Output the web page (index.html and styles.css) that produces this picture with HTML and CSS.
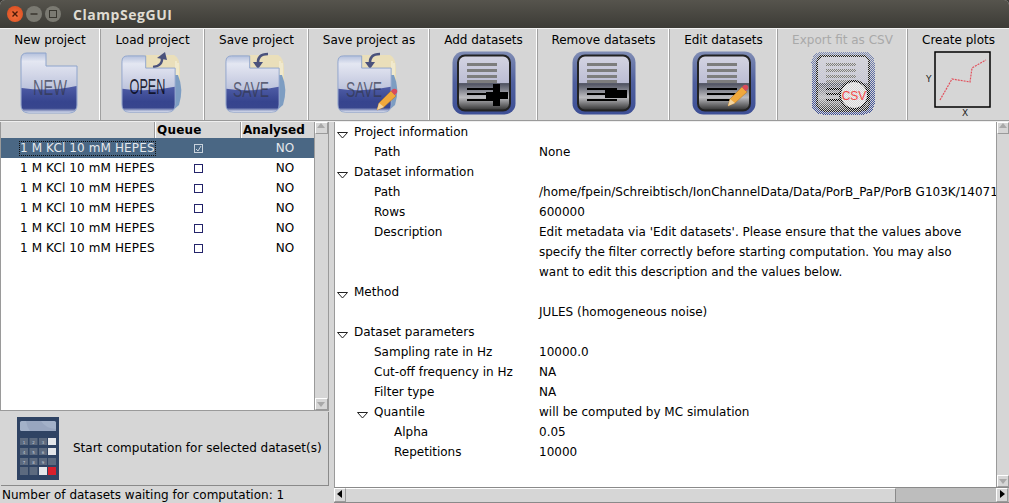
FILE: index.html
```html
<!DOCTYPE html>
<html>
<head>
<meta charset="utf-8">
<title>ClampSegGUI</title>
<link rel="stylesheet" href="styles.css">
</head>
<body>
<svg class="defs" width="0" height="0">
  <defs>
    <linearGradient id="fold" x1="0" y1="0" x2="0" y2="1">
      <stop offset="0" stop-color="#b4c0dc"/><stop offset=".14" stop-color="#e4e7f2"/><stop offset=".35" stop-color="#d3d7e8"/><stop offset=".6" stop-color="#bcc3dc"/><stop offset="1" stop-color="#bcc3dc"/>
    </linearGradient>
    <linearGradient id="folddark" x1="0" y1="0" x2="0" y2="1">
      <stop offset="0" stop-color="#4f5da6"/><stop offset=".6" stop-color="#36448e"/><stop offset=".84" stop-color="#38468e"/><stop offset=".95" stop-color="#a8b2d2"/><stop offset="1" stop-color="#d6daea"/>
    </linearGradient>
    <linearGradient id="doc" x1="0" y1="0" x2="0" y2="1">
      <stop offset="0" stop-color="#d4d4e2"/><stop offset=".5" stop-color="#bcbdd4"/><stop offset=".51" stop-color="#4e5160"/><stop offset=".76" stop-color="#bcbcc0"/><stop offset="1" stop-color="#2e2e2e"/>
    </linearGradient>
    <linearGradient id="frame" x1="0" y1="0" x2="0" y2="1">
      <stop offset="0" stop-color="#7f8cb4"/><stop offset=".5" stop-color="#4f5f9e"/><stop offset="1" stop-color="#3d4f96"/>
    </linearGradient>
    <symbol id="folder" viewBox="0 0 60 64">
      <path d="M7 2H26V15H57V54Q57 62 49 62H9Q1 62 1 54V8Q1 2 7 2Z" fill="url(#fold)" stroke="#8ea4cc"/>
      <path d="M1.500 37Q30 41 56.500 35V54Q56.500 61.500 49 61.500H9Q1.500 61.500 1.500 54Z" fill="url(#folddark)"/>
    </symbol>
    <symbol id="docs" viewBox="0 0 64 64">
      <rect x="0.500" y="0.500" width="63" height="63" rx="11" fill="url(#frame)"/>
      <rect x="6" y="4.500" width="52" height="55" rx="7" fill="url(#doc)" stroke="#222" stroke-width="2"/>
      <g fill="#7d7d7d"><rect x="15" y="12" width="30" height="3"/><rect x="15" y="18" width="30" height="3"/><rect x="15" y="24" width="30" height="3"/><rect x="15" y="29" width="30" height="3"/></g>
      <g fill="#000"><rect x="15" y="37" width="30" height="2"/><rect x="15" y="42" width="30" height="2"/><rect x="15" y="48" width="30" height="2"/></g>
    </symbol>
    <symbol id="pencil" viewBox="0 0 24 24">
      <path d="M3 22L5 15 17 3 22 8 10 19Z" fill="#f0a83c" stroke="#b57a2c" stroke-width=".6"/>
      <path d="M3 22L5 15 10 19Z" fill="#f2d4a0"/>
      <path d="M17 3L19 1Q21 0 23 2 24 4 22 6L20.500 7Z" fill="#d94a5c"/>
    </symbol>
    <symbol id="back" viewBox="0 0 66 66">
      <path d="M24 4H54Q60 7 60 18V46H24Z" fill="#eadfba"/>
      <path d="M56 10V44M58 12V44" stroke="#fbf8ea" stroke-width=".8"/>
      <path d="M58 24Q64 38 59 54L52 60V24Z" fill="#7d9dc2"/>
    </symbol>
  </defs>
</svg>
<div class="window">
  <header class="titlebar">
    <span class="wbtn close"><svg viewBox="0 0 16 16" width="16" height="16"><path d="M5.500 5.500l5 5M10.500 5.500l-5 5" stroke="#4a1a08" stroke-width="1.400"/></svg></span>
    <span class="wbtn"><svg viewBox="0 0 16 16" width="16" height="16"><path d="M4.500 8h7" stroke="#38362f" stroke-width="1.400"/></svg></span>
    <span class="wbtn"><svg viewBox="0 0 16 16" width="16" height="16"><rect x="4.500" y="4.500" width="7" height="7" fill="none" stroke="#38362f"/></svg></span>
    <span class="apptitle">ClampSegGUI</span>
  </header>

  <nav class="toolbar">
    <div class="tool"><span>New project</span>
      <svg class="ic" width="60" height="64" viewBox="0 0 60 64"><use href="#folder"/><text x="30" y="44" class="it" textLength="34" lengthAdjust="spacingAndGlyphs">NEW</text></svg></div>
    <div class="tool"><span>Load project</span>
      <svg class="ic nudge" width="66" height="66" viewBox="0 0 66 66"><use href="#back"/><path d="M33 16Q43 15 42 6" fill="none" stroke="#4a527c" stroke-width="2.500"/><path d="M37 7L45 1 47 9Z" fill="#4a527c"/><svg x="1" y="3" width="57" height="60" viewBox="0 0 60 64" preserveAspectRatio="none"><use href="#folder" width="60" height="64"/></svg><text x="27.500" y="43" class="it dark" textLength="36" lengthAdjust="spacingAndGlyphs">OPEN</text></svg></div>
    <div class="tool"><span>Save project</span>
      <svg class="ic nudge" width="66" height="66" viewBox="0 0 66 66"><use href="#back"/><path d="M44 3Q33 3 34 13" fill="none" stroke="#4a527c" stroke-width="2.500"/><path d="M29 11L39 11 34 18Z" fill="#4a527c"/><svg x="1" y="3" width="57" height="60" viewBox="0 0 60 64" preserveAspectRatio="none"><use href="#folder" width="60" height="64"/></svg><text x="27" y="46" class="it" textLength="36" lengthAdjust="spacingAndGlyphs">SAVE</text></svg></div>
    <div class="tool"><span>Save project as</span>
      <svg class="ic" width="66" height="66" viewBox="0 0 66 66"><use href="#back"/><path d="M44 3Q33 3 34 13" fill="none" stroke="#4a527c" stroke-width="2.500"/><path d="M29 11L39 11 34 18Z" fill="#4a527c"/><svg x="1" y="3" width="57" height="60" viewBox="0 0 60 64" preserveAspectRatio="none"><use href="#folder" width="60" height="64"/></svg><text x="28" y="46" class="it" textLength="36" lengthAdjust="spacingAndGlyphs">SAVE</text><use href="#pencil" x="38" y="37" width="24" height="24"/></svg></div>
    <div class="tool"><span>Add datasets</span>
      <svg class="ic nudge" width="64" height="64" viewBox="0 0 64 64"><use href="#docs"/><rect x="41" y="33" width="7" height="22" fill="#000"/><rect x="34" y="41" width="22" height="7" fill="#000"/></svg></div>
    <div class="tool"><span>Remove datasets</span>
      <svg class="ic nudge" width="64" height="64" viewBox="0 0 64 64"><use href="#docs"/><rect x="33" y="39" width="22" height="8" fill="#000"/></svg></div>
    <div class="tool"><span>Edit datasets</span>
      <svg class="ic nudge" width="64" height="64" viewBox="0 0 64 64"><use href="#docs"/><use href="#pencil" x="33" y="33" width="24" height="24"/></svg></div>
    <div class="tool off"><span>Export fit as CSV</span>
      <svg class="ic nudge" width="64" height="64" viewBox="0 0 64 64" shape-rendering="crispEdges"><defs><pattern id="chk" width="2" height="2" patternUnits="userSpaceOnUse"><rect width="1" height="1" fill="#d6d6d6"/><rect x="1" y="1" width="1" height="1" fill="#d6d6d6"/></pattern></defs><use href="#docs"/><circle cx="43" cy="44" r="14" fill="#eeeeee" stroke="#000" stroke-width="2" shape-rendering="auto"/><rect width="64" height="64" fill="url(#chk)"/><text x="43" y="49" class="csv">CSV</text></svg></div>
    <div class="tool last"><span>Create plots</span>
      <svg class="ic left" width="70" height="66" viewBox="0 0 70 66"><rect x="12" y="1" width="55" height="55" fill="none" stroke="#000" stroke-width="1.500"/><path d="M17 49L29 28 47 31 49 17 63 9" fill="none" stroke="#e2505c" stroke-width="1.200" stroke-dasharray="2 1"/><text x="3" y="31" class="ax">Y</text><text x="39" y="65" class="ax">X</text></svg></div>
  </nav>

  <main class="panes">
    <section class="leftpane">
      <div class="listbox">
        <div class="listmain">
          <div class="lhead"><span></span><span>Queue</span><span>Analysed</span></div>
          <div class="lrow sel"><span class="dname"><em>1 M KCl 10 mM HEPES</em></span><span class="cb on"><svg width="9" height="9" viewBox="0 0 9 9"><path d="M2 5l2 2 3-5" fill="none" stroke="#d6dde4" stroke-width=".9"/></svg></span><span class="no">NO</span></div>
          <div class="lrow"><span class="dname"><em>1 M KCl 10 mM HEPES</em></span><span class="cb"></span><span class="no">NO</span></div>
          <div class="lrow"><span class="dname"><em>1 M KCl 10 mM HEPES</em></span><span class="cb"></span><span class="no">NO</span></div>
          <div class="lrow"><span class="dname"><em>1 M KCl 10 mM HEPES</em></span><span class="cb"></span><span class="no">NO</span></div>
          <div class="lrow"><span class="dname"><em>1 M KCl 10 mM HEPES</em></span><span class="cb"></span><span class="no">NO</span></div>
          <div class="lrow"><span class="dname"><em>1 M KCl 10 mM HEPES</em></span><span class="cb"></span><span class="no">NO</span></div>
        </div>
        <div class="vscroll"><i class="arr up"></i><b></b><i class="arr down"></i></div>
      </div>
      <div class="startbtn">
        <svg class="calc" width="42" height="63" viewBox="0 0 42 63">
          <rect width="42" height="63" fill="#2f4363"/>
          <rect x="3" y="4" width="36" height="10" rx="1.500" fill="#a3b1c8"/>
          <path d="M9 4H24Q28 11 39 12V14H13Q10 10 9 4Z" fill="#98a6bf"/>
          <g fill="#5c6a7f">
            <rect x="3" y="21" width="8" height="7"/><rect x="12.500" y="21" width="8" height="7"/><rect x="22" y="21" width="8" height="7"/>
            <rect x="3" y="31" width="8" height="7"/><rect x="12.500" y="31" width="8" height="7"/><rect x="22" y="31" width="8" height="7"/>
            <rect x="3" y="41" width="8" height="7"/><rect x="12.500" y="41" width="8" height="7"/><rect x="22" y="41" width="8" height="7"/><rect x="31" y="41" width="8" height="7"/>
            <rect x="3" y="50" width="8" height="8"/><rect x="12.500" y="50" width="8" height="8"/>
          </g>
          <g fill="#e4e6ea"><rect x="31" y="21" width="8" height="7"/><rect x="31" y="31" width="8" height="7"/><rect x="22" y="50" width="8" height="8"/></g>
          <rect x="31" y="50" width="8" height="8" fill="#d81f2c"/>
          <g class="keys">
            <text x="7" y="26.500">1</text><text x="16.500" y="26.500">2</text><text x="26" y="26.500">3</text>
            <text x="7" y="36.500">4</text><text x="16.500" y="36.500">5</text><text x="26" y="36.500">6</text>
            <text x="7" y="46.500">7</text><text x="16.500" y="46.500">8</text><text x="26" y="46.500">9</text>
          </g>
        </svg>
        <span>Start computation for selected dataset(s)</span>
      </div>
      <div class="status">Number of datasets waiting for computation: 1</div>
    </section>

    <section class="rightpane">
      <div class="treewrap">
        <div class="tree">
          <div class="trow"><span class="tl l0"><svg class="tw" width="11" height="7" viewBox="0 0 11 7"><path d="M.5 .5H10.500L5.500 6Z" fill="#fff" stroke="#222"/></svg>Project information</span><span></span></div>
          <div class="trow"><span class="tl l1">Path</span><span>None</span></div>
          <div class="trow"><span class="tl l0"><svg class="tw" width="11" height="7" viewBox="0 0 11 7"><path d="M.5 .5H10.500L5.500 6Z" fill="#fff" stroke="#222"/></svg>Dataset information</span><span></span></div>
          <div class="trow"><span class="tl l1">Path</span><span>/home/fpein/Schreibtisch/IonChannelData/Data/PorB_PaP/PorB G103K/14071</span></div>
          <div class="trow"><span class="tl l1">Rows</span><span>600000</span></div>
          <div class="trow"><span class="tl l1">Description</span><span>Edit metadata via 'Edit datasets'. Please ensure that the values above</span></div>
          <div class="trow"><span class="tl l1"></span><span>specify the filter correctly before starting computation. You may also</span></div>
          <div class="trow"><span class="tl l1"></span><span>want to edit this description and the values below.</span></div>
          <div class="trow"><span class="tl l0"><svg class="tw" width="11" height="7" viewBox="0 0 11 7"><path d="M.5 .5H10.500L5.500 6Z" fill="#fff" stroke="#222"/></svg>Method</span><span></span></div>
          <div class="trow"><span class="tl l1"></span><span>JULES (homogeneous noise)</span></div>
          <div class="trow"><span class="tl l0"><svg class="tw" width="11" height="7" viewBox="0 0 11 7"><path d="M.5 .5H10.500L5.500 6Z" fill="#fff" stroke="#222"/></svg>Dataset parameters</span><span></span></div>
          <div class="trow"><span class="tl l1">Sampling rate in Hz</span><span>10000.0</span></div>
          <div class="trow"><span class="tl l1">Cut-off frequency in Hz</span><span>NA</span></div>
          <div class="trow"><span class="tl l1">Filter type</span><span>NA</span></div>
          <div class="trow"><span class="tl l1 sub"><svg class="tw" width="11" height="7" viewBox="0 0 11 7"><path d="M.5 .5H10.500L5.500 6Z" fill="#fff" stroke="#222"/></svg>Quantile</span><span>will be computed by MC simulation</span></div>
          <div class="trow"><span class="tl l2">Alpha</span><span>0.05</span></div>
          <div class="trow"><span class="tl l2">Repetitions</span><span>10000</span></div>
        </div>
        <div class="vscroll main"><i class="arr up"></i><b></b><i class="arr down"></i></div>
      </div>
      <div class="hscroll"><i class="arr left"></i><b></b><u></u><i class="arr right"></i></div>
    </section>
  </main>
</div>
</body>
</html>
```

FILE: styles.css
```css
* { box-sizing: border-box; }
html, body { margin: 0; padding: 0; height: 100%; background: #3c3b37; }
body { overflow: hidden; font-family: "DejaVu Sans", sans-serif; font-size: 12px; color: #000; }
.defs { position: absolute; }
.window { width: 1009px; height: 503px; display: flex; flex-direction: column; background: #d6d6d6; border-radius: 5px 5px 0 0; overflow: hidden; }

.titlebar { height: 28px; flex: none; display: flex; align-items: center; padding-left: 7px; gap: 3px; background: linear-gradient(#56544d, #3c3b36); }
.wbtn { width: 16px; height: 16px; border-radius: 50%; background: #7b7a72; display: block; flex: none; }
.wbtn svg { display: block; }
.wbtn.close { background: radial-gradient(circle at 50% 60%, #f0703c, #d9481c); }
.apptitle { margin-left: 9px; color: #dfdbd2; font: bold 14px "Open Sans", "DejaVu Sans", sans-serif; letter-spacing: .55px; }

.toolbar { height: 93px; flex: none; display: grid; grid-template-columns: 101px 104px 104px 121px 108px 132px 108px 130px 101px; border-top: 1px solid #f2f2f2; border-bottom: 1px solid #9a9a9a; }
.tool { display: flex; flex-direction: column; align-items: center; border-right: 1px solid #a0a0a0; box-shadow: inset -1px 0 0 #fff; padding-top: 3px; }
.tool.last { border-right: 0; box-shadow: none; }
.tool > span { line-height: 16px; height: 16px; white-space: nowrap; }
.tool .ic { margin-top: 3px; flex: none; display: block; overflow: visible; }
.tool .ic.nudge { margin-left: 1px; }
.tool .ic.left { margin-right: 1px; }
.tool.off > span { color: #a9a9a9; }
.it { font-family: "Liberation Sans", sans-serif; font-size: 22px; font-weight: 400; text-anchor: middle; fill: #33374e; fill-opacity: .72; }
.it.dark { fill: #0a0c1c; fill-opacity: .9; }
.csv { font-family: "Liberation Sans", sans-serif; font-size: 12px; text-anchor: middle; fill: #f24a4a; }
.ax { font-size: 9px; fill: #222; }

.panes { flex: 1; min-height: 0; display: flex; background: #d6d6d6; border-top: 1px solid #efefef; }
.leftpane { width: 334px; flex: none; display: flex; flex-direction: column; padding: 0 5px 0 0; }
.listbox { height: 289px; flex: none; display: flex; background: #fff; border: 1px solid #9a9a9a; border-top: 0; }
.listmain { flex: 1; min-width: 0; }
.lhead { height: 16px; display: grid; grid-template-columns: 155px 86px 1fr; background: #d6d6d6; font-weight: bold; line-height: 16px; }
.lhead span { border-right: 1px solid #fff; box-shadow: inset -1px 0 0 #9a9a9a; overflow: hidden; white-space: nowrap; }
.lhead span:nth-child(2) { padding-left: 1px; letter-spacing: .2px; }
.lhead span:nth-child(3) { padding-left: 1px; border-right: 0; box-shadow: none; }
.lrow { height: 20px; display: grid; grid-template-columns: 155px 86px 1fr; align-items: center; }
.lrow.sel { background: #4a6784; color: #e4e8ec; }
.dname { margin-left: 18px; white-space: nowrap; overflow: hidden; }
.dname em { display: block; font-style: normal; height: 15px; line-height: 15px; padding-left: 1px; letter-spacing: .12px; }
.sel .dname em { outline: 1px dotted #111; outline-offset: -1px; }
.cb { width: 9px; height: 9px; border: 1px solid #24246a; justify-self: center; margin-right: 1px; display: block; }
.cb svg { display: block; margin: -1px; }
.cb.on { border-color: #c8d2dc; }
.no { text-align: center; padding-left: 14px; }

.vscroll { width: 14px; flex: none; display: flex; flex-direction: column; background: #d6d6d6; border-left: 1px solid #9a9a9a; }
.vscroll b { flex: 1; }
.arr { display: block; height: 12px; flex: none; position: relative; background: #d6d6d6; border: 1px solid #fff; border-bottom-color: #9a9a9a; border-right-color: #9a9a9a; }
.arr::after { content: ""; position: absolute; border: 4px solid transparent; }
.arr.up::after { left: 1px; top: 0; border-top: 0; border-bottom: 5px solid #a8a8a8; border-left-width: 4px; border-right-width: 4px; }
.arr.down::after { left: 1px; top: 3px; border-bottom: 0; border-top: 5px solid #a8a8a8; }
.arr.left, .arr.right { width: 12px; height: 12px; }
.arr.left::after { left: 2px; top: 1px; border-left: 0; border-right: 5px solid #000; }
.arr.right::after { left: 3px; top: 1px; border-right: 0; border-left: 5px solid #000; }

.startbtn { height: 74px; flex: none; display: flex; align-items: center; margin: 1px 0 0 1px; border-right: 1px solid #8a8a8a; border-bottom: 1px solid #8a8a8a; padding: 0 0 1px 16px; gap: 14px; }
.startbtn > span { white-space: nowrap; }
.calc { display: block; flex: none; }
.keys text { font-size: 4px; fill: #c4ccd8; text-anchor: middle; }
.status { height: 17px; line-height: 18px; padding-left: 2px; white-space: nowrap; }

.rightpane { flex: 1; min-width: 0; display: flex; flex-direction: column; }
.treewrap { flex: 1; min-height: 0; display: flex; background: #fff; border-left: 1px solid #9a9a9a; border-bottom: 1px solid #8a8a8a; }
.tree { flex: 1; min-width: 0; overflow: hidden; }
.trow { height: 20px; display: grid; grid-template-columns: 204px 1fr; align-items: center; white-space: nowrap; }
.tl { display: block; position: relative; }
.l0 { padding-left: 19px; }
.l1 { padding-left: 39px; }
.l2 { padding-left: 59px; }
.tw { display: block; position: absolute; left: 2px; top: 7px; width: 11px; height: 7px; }
.sub .tw { left: 22px; }
.vscroll.main { width: 13px; }
.hscroll { height: 15px; flex: none; display: flex; align-items: stretch; background: #bdbdbd; border-bottom: 1px solid #8a8a8a; padding-right: 1px; }
.hscroll .arr { height: 14px; }
.hscroll b { width: 550px; flex: none; background: #d6d6d6; border-top: 1px solid #fff; border-right: 1px solid #8a8a8a; }
.hscroll u { flex: 1; }
```
